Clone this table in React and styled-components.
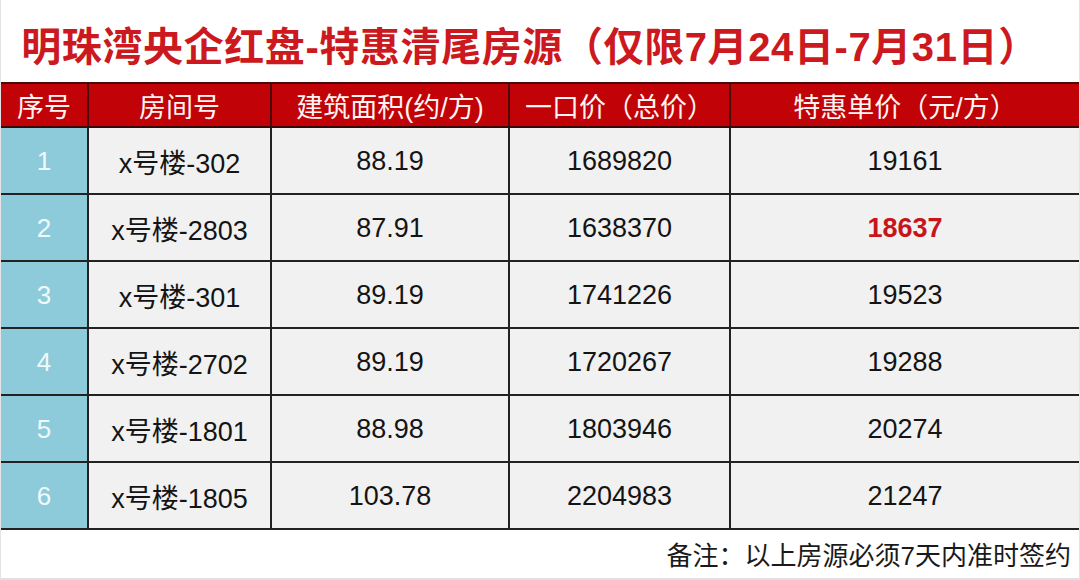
import React from "react";
import styled, { createGlobalStyle } from "styled-components";

const Global = createGlobalStyle`
  html, body { margin: 0; padding: 0; background: #fff; }
  body { font-family: "Liberation Sans", "Noto Sans CJK SC", sans-serif; }
`;

const Page = styled.div`
  width: 1080px;
  height: 580px;
  box-sizing: border-box;
  border-left: 1px solid #e4e4e4;
  border-right: 1px solid #e4e4e4;
  border-bottom: 2px solid #e0e0e0;
  background: #fff;
  display: flex;
  flex-direction: column;
  overflow: hidden;
`;

const Title = styled.h1`
  margin: 0;
  height: 82px;
  display: flex;
  align-items: center;
  justify-content: center;
  padding-right: 20px;
  padding-top: 6px;
  box-sizing: border-box;
  font-size: 40px;
  font-weight: 700;
  color: #cc1920;
  letter-spacing: 0.6px;
  white-space: nowrap;
`;

const Grid = styled.div`
  display: grid;
  grid-template-columns: 88px 183px 238px 221px 1fr;
  grid-auto-rows: 67px;
  grid-template-rows: 44px;
  border-top: 2px solid #4a0a0a;
`;

const Cell = styled.div`
  display: flex;
  align-items: center;
  justify-content: center;
  box-sizing: border-box;
  border-right: ${(p) => (p.$last ? "none" : "2px solid #222")};
  border-bottom: 2px solid #222;
  background: #f1f1f1;
  color: #141414;
  font-size: 27px;
  padding-top: 2px;
  white-space: nowrap;
`;

const HeadCell = styled(Cell)`
  background: #c10207;
  color: #fff4f2;
  font-size: 27px;
  border-right-color: #4a0a0a;
  border-bottom-color: #3a0606;
  padding-top: 0;
`;

const IndexCell = styled(Cell)`
  background: #8ecbda;
  color: #eefafc;
  font-size: 26px;
`;

const PriceCell = styled(Cell)`
  color: ${(p) => (p.$hot ? "#c8151c" : "#141414")};
  font-weight: ${(p) => (p.$hot ? 700 : 400)};
`;

const Note = styled.div`
  flex: 1;
  display: flex;
  align-items: center;
  justify-content: flex-end;
  padding-right: 8px;
  padding-bottom: 2px;
  font-size: 26px;
  color: #1a1a1a;
`;

const headers = ["序号", "房间号", "建筑面积(约/方)", "一口价（总价）", "特惠单价（元/方）"];

const rows = [
  ["x号楼-302", "88.19", "1689820", "19161"],
  ["x号楼-2803", "87.91", "1638370", "18637", true],
  ["x号楼-301", "89.19", "1741226", "19523"],
  ["x号楼-2702", "89.19", "1720267", "19288"],
  ["x号楼-1801", "88.98", "1803946", "20274"],
  ["x号楼-1805", "103.78", "2204983", "21247"],
];

export default function App() {
  return (
    <>
      <Global />
      <Page>
        <Title>明珠湾央企红盘-特惠清尾房源（仅限7月24日-7月31日）</Title>
        <Grid>
          {headers.map((h, i) => (
            <HeadCell key={h} $last={i === headers.length - 1}>
              {h}
            </HeadCell>
          ))}
          {rows.map((r, i) => (
            <React.Fragment key={i}>
              <IndexCell>{i + 1}</IndexCell>
              <Cell>{r[0]}</Cell>
              <Cell>{r[1]}</Cell>
              <Cell>{r[2]}</Cell>
              <PriceCell $last $hot={r[4]}>{r[3]}</PriceCell>
            </React.Fragment>
          ))}
        </Grid>
        <Note>备注：以上房源必须7天内准时签约</Note>
      </Page>
    </>
  );
}
